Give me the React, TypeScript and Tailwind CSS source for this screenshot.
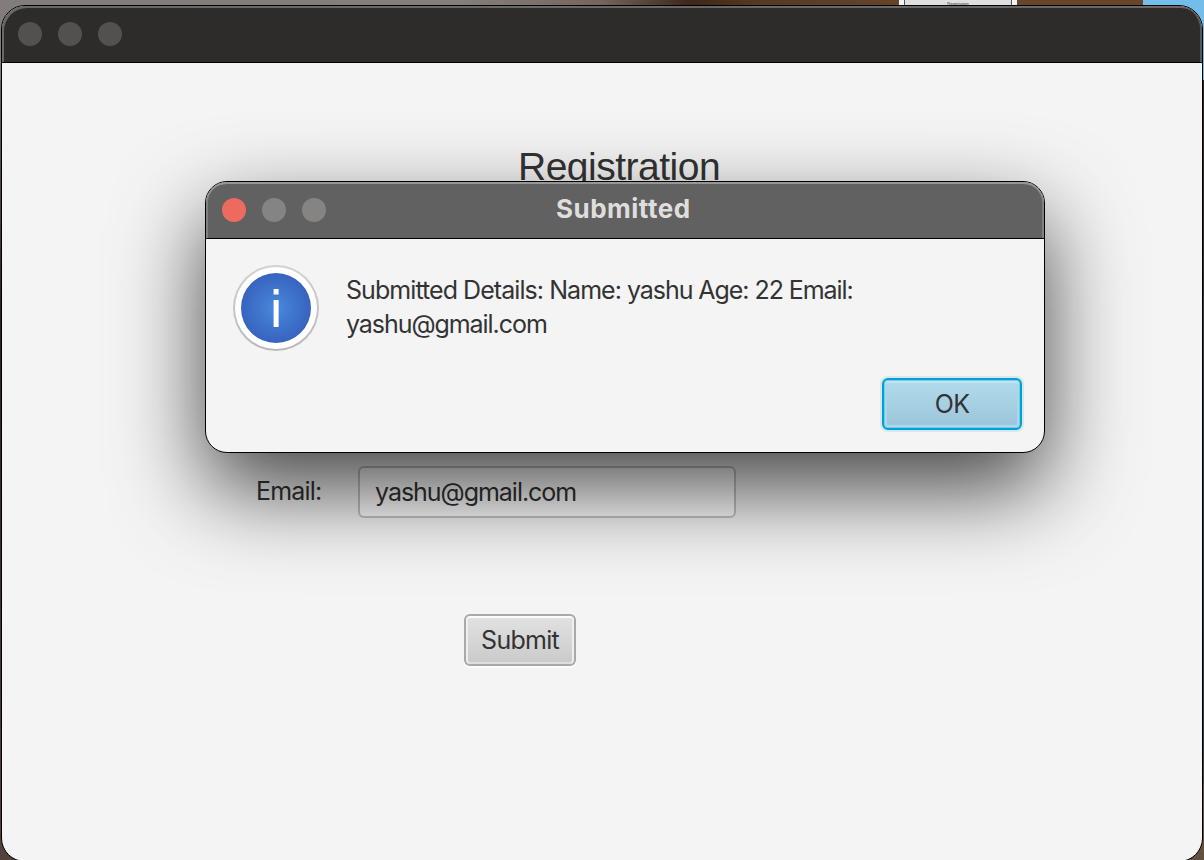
import React from "react";

function Dot({ className }: { className: string }) {
  return <span className={`block h-6 w-6 rounded-full ${className}`} />;
}

function Desktop() {
  return (
    <div className="absolute inset-0 flex flex-col bg-[#4a3a34]">
      <div className="flex h-[80px]">
        <div className="h-full w-[899px] bg-[linear-gradient(90deg,#827d7b_0px,#857e7b_460px,#75655c_600px,#3d2717_690px,#57391f_760px,#65442a_899px)]" />
        <div className="h-[6px] w-[118px] bg-[#f4f4f4] px-[5px]">
          <div className="flex h-[5px] justify-center overflow-hidden border-x border-[#555] bg-[#e0e0e0] font-['Liberation_Sans',sans-serif] text-[4px] leading-[7px] text-[#333]">
            Registration
          </div>
        </div>
        <div className="h-full w-[126px] bg-[#66452a]" />
        <div className="h-full flex-1 bg-[#72bdea]" />
      </div>
      <div className="flex flex-1 justify-between">
        <div className="w-8 bg-[linear-gradient(180deg,#6e625e,#32211c_30%,#54413b)]" />
        <div className="w-8 bg-[linear-gradient(180deg,#2b211c_0%,#353c40_40%,#303a40_85%,#62513f_95%)]" />
      </div>
    </div>
  );
}

function MainWindow() {
  return (
    <main className="relative ml-px mt-[5px] flex h-[857px] w-[1202px] flex-col overflow-hidden rounded-[24px] border border-black bg-[#f4f4f4]">
      <header className="flex h-[57px] shrink-0 items-center gap-4 rounded-t-[23px] border-b border-black bg-[#2e2c2a] pl-4 shadow-[inset_2px_2px_0_#6a6866,inset_-2px_0_0_#5a5856]">
        <Dot className="bg-[#53514e]" />
        <Dot className="bg-[#53514e]" />
        <Dot className="bg-[#53514e]" />
      </header>
      <h1 className="ml-[516px] mt-[81px] h-[46px] font-['Liberation_Sans',sans-serif] text-[39px] leading-[46px] tracking-[-0.5px] text-[#333]">
        Registration
      </h1>
      <div className="mt-[276px] flex items-center pl-[254px] font-[Inter,sans-serif] text-[25px] text-[#333]">
        <label className="w-[102px] tracking-[-0.8px]">Email:</label>
        <div className="flex h-[52px] w-[378px] items-center rounded-[6px] border-2 border-[#c4c4c4] bg-white pl-[15px] pt-px tracking-[-1.03px]">
          yashu@gmail.com
        </div>
      </div>
      <button className="ml-[462px] mt-24 h-[52px] w-[112px] rounded-[6px] border-2 border-[#a9a9a9] bg-[linear-gradient(180deg,#e2e2e2,#cacaca)] pt-[2px] font-[Inter,sans-serif] text-[25px] tracking-[-0.75px] text-[#333] shadow-[inset_0_2px_0_#fbfbfb,inset_2px_0_0_#eeeeee,inset_-2px_0_0_#eeeeee,inset_0_-2px_0_#dedede,0_2px_0_#fcfcfc]">
        Submit
      </button>
    </main>
  );
}

function InfoIcon() {
  return (
    <svg width="88" height="88" viewBox="0 0 88 88" className="shrink-0">
      <defs>
        <radialGradient id="info">
          <stop offset="0" stopColor="#488adb" />
          <stop offset="1" stopColor="#3763bf" />
        </radialGradient>
        <linearGradient id="ring" x1="0" y1="0" x2="0" y2="1">
          <stop offset="0" stopColor="#d2d2d2" />
          <stop offset="1" stopColor="#b9b9b9" />
        </linearGradient>
      </defs>
      <circle cx="44" cy="44" r="43" fill="url(#ring)" />
      <circle cx="44" cy="44" r="41" fill="#fff" />
      <circle cx="44" cy="44" r="35" fill="url(#info)" />
      <rect x="41.6" y="25" width="5" height="5.5" fill="#fff" />
      <rect x="41.6" y="36" width="5" height="27" fill="#fff" />
    </svg>
  );
}

function Dialog() {
  return (
    <section
      role="dialog"
      className="absolute left-[205px] top-[181px] flex h-[272px] w-[840px] flex-col rounded-[22px] border border-black bg-[#f4f4f4] shadow-[0_36px_88px_rgba(0,0,0,0.72)]"
    >
      <header className="relative flex h-[57px] shrink-0 items-center gap-4 rounded-t-[21px] border-b border-black bg-[#616161] pl-4 shadow-[inset_0_2px_0_#969696,inset_2px_0_0_#808080,inset_-2px_0_0_#808080]">
        <Dot className="bg-[#ed6a5e]" />
        <Dot className="bg-[#858482]" />
        <Dot className="bg-[#858482]" />
        <h2 className="mb-[2px] ml-[214px] font-[Inter,sans-serif] text-[26px] font-bold leading-8 tracking-[0.5px] text-[#dfdedd]">
          Submitted
        </h2>
      </header>
      <div className="flex pl-[26px] pt-[25px]">
        <InfoIcon />
        <p className="ml-[26px] mt-[9px] font-[Inter,sans-serif] text-[25px] leading-[34px] tracking-[-1.06px] text-[#333]">
          <span className="tracking-[-0.94px]">Submitted Details: Name:</span> yashu Age: 22 Email:
          <br />
          yashu@gmail.com
        </p>
      </div>
      <div className="flex justify-end pr-[22px] pt-[26px]">
        <button className="h-[52px] w-[140px] rounded-[6px] border-[2px] border-[#039ed3] bg-[linear-gradient(180deg,#b2dbed,#9cc4d9)] pt-px font-[Inter,sans-serif] text-[25px] tracking-[-0.8px] text-[#333] shadow-[0_0_0_2px_#d3e8f1,inset_0_0_0_1px_#7fcbe6,inset_0_3px_0_#bde4f2,inset_0_0_0_3px_#a5d9ee]">
          OK
        </button>
      </div>
    </section>
  );
}

export default function App() {
  return (
    <div className="relative h-[860px] w-[1204px] overflow-hidden">
      <Desktop />
      <MainWindow />
      <Dialog />
    </div>
  );
}
